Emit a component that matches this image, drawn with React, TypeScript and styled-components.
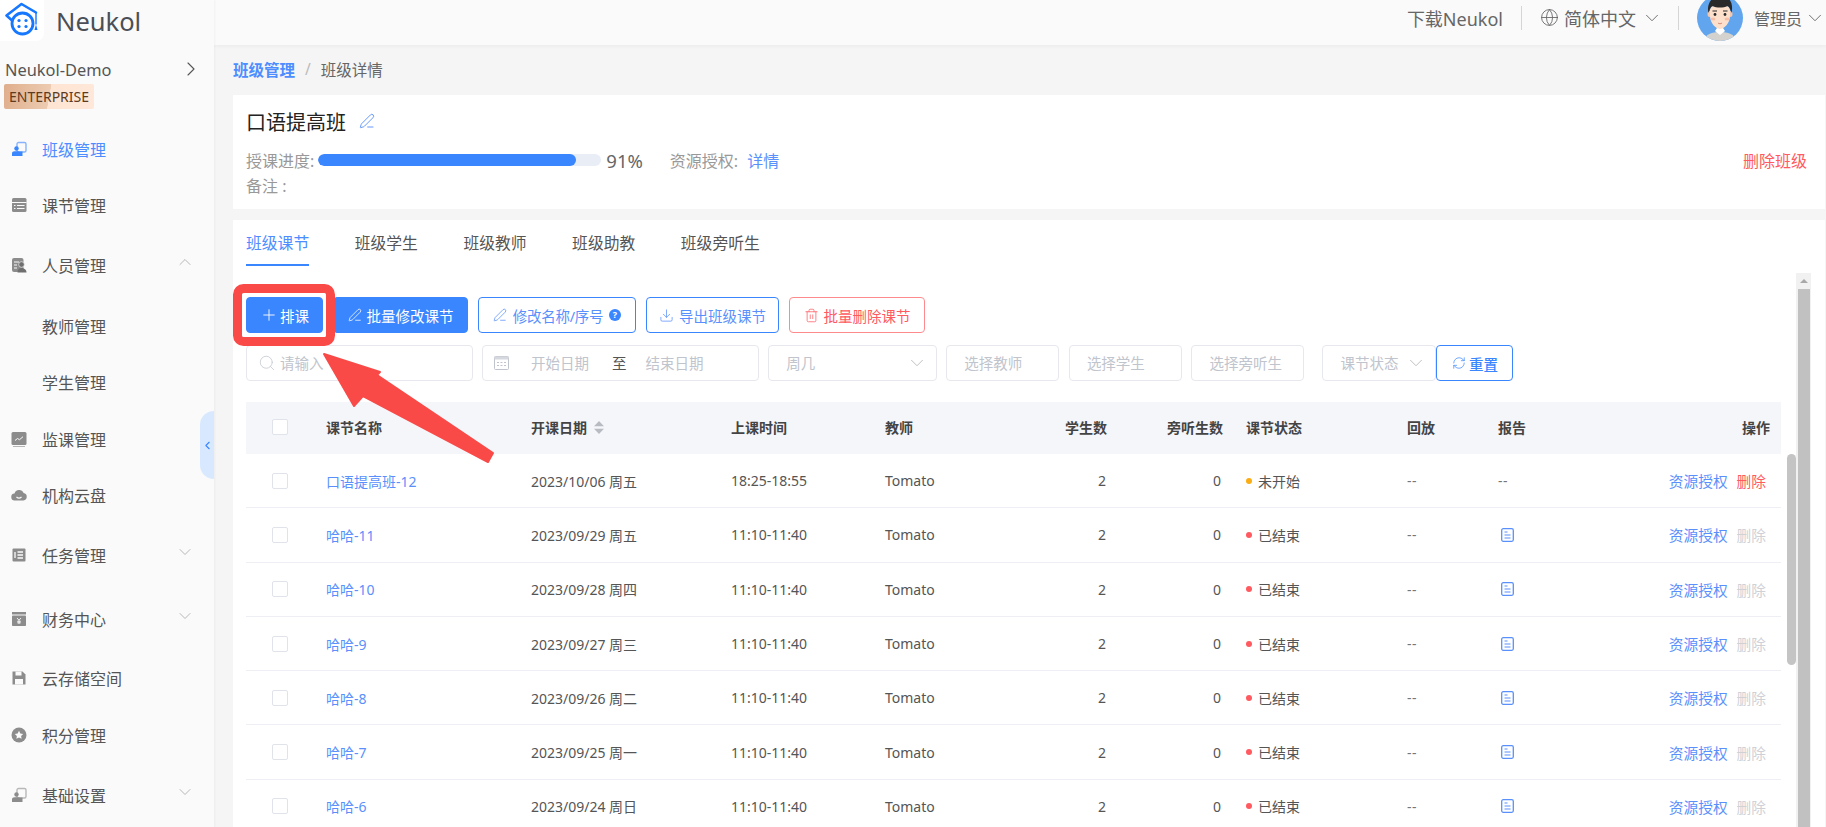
import React from "react"
import styled, { createGlobalStyle } from "styled-components"
import {
  ChevronDown,
  ChevronLeft,
  ChevronRight,
  ChevronUp,
  Download,
  Globe,
  PenLine,
  Plus,
  RefreshCw,
  Search,
  Trash2,
} from "lucide-react"

const blue = "#3a86ff"
const link = "#5a90fb"
const red = "#ff5a5f"

const GlobalStyle = createGlobalStyle`
  html, body {
    margin: 0;
    height: 100%;
    overflow: hidden;
  }
  body {
    font-family: "Noto Sans", "Noto Sans CJK SC", sans-serif;
    color: #555;
  }
`

const Page = styled.div`
  position: relative;
  display: flex;
  width: 1826px;
  height: 827px;
  overflow: hidden;
  background: #f5f5f5;
`

const Sidebar = styled.aside`
  position: relative;
  flex: 0 0 214px;
  background: #fafafa;
  box-shadow: 1px 0 2px rgba(0, 0, 0, 0.04);
`

const Brand = styled.div`
  display: flex;
  align-items: center;
  gap: 12px;
  height: 41px;
  font-size: 25.5px;
  color: #4a4f57;
`

const LogoTile = styled.div`
  width: 44px;
  height: 41px;
  background: #fff;
  border-radius: 0 0 8px 0;
`

const Org = styled.div`
  display: flex;
  align-items: center;
  justify-content: space-between;
  height: 24px;
  margin-top: 16px;
  padding: 0 11px 0 5px;
  font-size: 16.4px;
`

const EnterpriseBadge = styled.div`
  width: 90px;
  height: 25px;
  margin: 3px 0 0 4px;
  border-radius: 2px;
  background: linear-gradient(100deg, #dfae8c 0, #edcbb1 50%, #fee4d2 50.5%, #ffe8d9 100%);
  color: #5e3a20;
  font-size: 14px;
  line-height: 25px;
  text-align: center;
`

const Menu = styled.nav`
  margin-top: 20px;
`

const MenuItem = styled.div<{ $gap?: number; $active?: boolean }>`
  display: flex;
  align-items: center;
  height: 40px;
  margin-top: ${(p) => p.$gap ?? 0}px;
  padding: 0 19px 0 11px;
  font-size: 16px;
  color: ${(p) => (p.$active ? "#4d8dff" : "#555")};
`

const MenuIcon = styled.svg`
  flex: 0 0 16px;
  width: 16px;
  height: 16px;
  margin-right: 15px;
`

const MenuSpacer = styled.span`
  flex: 0 0 31px;
`

const MenuCaret = styled.span`
  display: flex;
  margin-left: auto;
  margin-top: -6px;
  color: #aaa;
`

const CollapseHandle = styled.div`
  position: absolute;
  top: 411px;
  right: 0;
  display: flex;
  align-items: center;
  justify-content: center;
  width: 14px;
  height: 68px;
  border-radius: 14px 0 0 14px;
  background: #d8e9ff;
  color: ${blue};
`

const Main = styled.main`
  flex: 1;
  min-width: 0;
  display: flex;
  flex-direction: column;
`

const TopBar = styled.header`
  display: flex;
  align-items: center;
  justify-content: flex-end;
  flex: 0 0 45px;
  height: 45px;
  min-height: 0;
  box-sizing: border-box;
  padding: 0 3px 10px 0;
  background: #fafafa;
  box-shadow: 0 1px 4px rgba(0, 0, 0, 0.05);
  font-size: 18px;
  color: #666;
`

const BarDivider = styled.span`
  width: 1px;
  height: 24px;
  margin: 0 18px;
  background: #d5d5d5;
`

const BarItem = styled.span<{ $small?: boolean }>`
  display: flex;
  align-items: center;
  gap: ${(p) => (p.$small ? 2 : 5)}px;
  font-size: ${(p) => (p.$small ? 16 : 18)}px;
`

const BarCaret = styled(ChevronDown)`
  margin-right: -3px;
`

const Avatar = styled.svg`
  width: 46px;
  height: 46px;
  margin: 0 11px 0 0;
  flex: none;
`

const Content = styled.div`
  flex: 1;
  min-height: 0;
  padding: 0 1px 0 19px;
`

const Crumbs = styled.div`
  display: flex;
  align-items: center;
  height: 50px;
  box-sizing: border-box;
  padding-bottom: 2px;
  font-size: 15.5px;
  color: #666;
`

const CrumbLink = styled.span`
  color: #4d8dff;
  font-weight: 700;
`

const CrumbSlash = styled.span`
  margin: 0 10px;
  color: #bbb;
`

const SummaryCard = styled.section`
  height: 114px;
  box-sizing: border-box;
  padding: 12px 18px 0 13px;
  background: #fff;
`

const TitleRow = styled.div`
  display: flex;
  align-items: center;
  gap: 13px;
  height: 28px;
  font-size: 20px;
  color: #222;
`

const InfoRow = styled.div<{ $first?: boolean }>`
  display: flex;
  align-items: center;
  height: ${(p) => (p.$first ? 26 : 24)}px;
  margin-top: ${(p) => (p.$first ? 12 : 0)}px;
  font-size: 16px;
  color: #999;
`

const ProgressTrack = styled.div`
  width: 283px;
  height: 12px;
  margin-left: 4px;
  border-radius: 6px;
  background: #e9edf5;
  overflow: hidden;
`

const ProgressFill = styled.div`
  height: 100%;
  border-radius: 6px;
  background: ${blue};
`

const Percent = styled.span`
  margin: 0 27px 0 5px;
  font-size: 18.5px;
  color: #666;
`

const LinkText = styled.span`
  margin-left: 9px;
  color: ${link};
`

const DangerText = styled.span`
  margin-left: auto;
  color: ${red};
`

const ClassCard = styled.section`
  position: relative;
  height: 607px;
  box-sizing: border-box;
  margin-top: 11px;
  padding: 11px 0 0 13px;
  background: #fff;
  overflow: hidden;
`

const Tabs = styled.div`
  display: flex;
  gap: 45.5px;
`

const Tab = styled.div<{ $active?: boolean }>`
  padding-bottom: 9px;
  border-bottom: 2px solid ${(p) => (p.$active ? blue : "transparent")};
  font-size: 15.8px;
  line-height: 24px;
  color: ${(p) => (p.$active ? "#4d8dff" : "#555")};
`

const Toolbar = styled.div`
  display: flex;
  gap: 10px;
  margin-top: 31px;
`

const Button = styled.button<{ $w: number; $tone: "solid" | "outline" | "danger"; $gap?: number }>`
  display: flex;
  align-items: center;
  justify-content: center;
  gap: ${(p) => p.$gap ?? 5}px;
  width: ${(p) => p.$w}px;
  height: 36px;
  padding: 0;
  border-radius: 4px;
  border: 1px solid ${(p) => (p.$tone === "danger" ? "#ff8a8e" : blue)};
  background: ${(p) => (p.$tone === "solid" ? blue : "#fff")};
  color: ${(p) => (p.$tone === "solid" ? "#fff" : p.$tone === "danger" ? red : link)};
  font: inherit;
  font-size: 14.5px;
`

const NameLabel = styled.span`
  letter-spacing: -0.3px;
`

const Filters = styled.div`
  display: flex;
  gap: 9.6px;
  margin-top: 12px;
`

const Field = styled.div<{ $w: number; $pad?: number; $after?: number }>`
  display: flex;
  align-items: center;
  width: ${(p) => p.$w}px;
  height: 36px;
  box-sizing: border-box;
  margin-left: ${(p) => p.$after ?? 0}px;
  padding: 0 8px 1px ${(p) => p.$pad ?? 11}px;
  border: 1px solid #e6e8ee;
  border-radius: 4px;
  font-size: 14.5px;
  color: #c0c4cc;
`

const FieldCaret = styled.span`
  display: flex;
  margin-left: auto;
  color: #bbb;
`

const FieldText = styled.span<{ $lead: number }>`
  margin-left: ${(p) => p.$lead}px;
`

const RangeTo = styled.span`
  margin: 0 19px 0 23px;
  color: #555;
`

const ResetButton = styled.button`
  display: flex;
  align-items: center;
  justify-content: center;
  gap: 3px;
  width: 77px;
  height: 36px;
  margin-left: -9.6px;
  padding: 0;
  border: 1px solid ${blue};
  border-radius: 4px;
  background: #fff;
  color: ${blue};
  font: inherit;
  font-size: 14.5px;
  font-weight: 500;
`

const Table = styled.div`
  width: 1535px;
  margin-top: 21px;
  font-size: 14px;
`

const columns = "80px 205px 200px 154px 115px 107px 116px 184px 91px 102px 181px"

const HeadRow = styled.div`
  display: grid;
  grid-template-columns: ${columns};
  align-items: center;
  height: 52px;
  box-sizing: border-box;
  padding-bottom: 2px;
  background: #f5f6fa;
  color: #444;
  font-weight: 700;
`

const BodyRow = styled.div`
  display: grid;
  grid-template-columns: ${columns};
  align-items: center;
  height: 54.3px;
  box-sizing: border-box;
  border-bottom: 1px solid #edeff5;
  color: #555;
`

const CheckCell = styled.div`
  padding-left: 26px;
`

const CheckBox = styled.span`
  display: block;
  width: 16px;
  height: 16px;
  box-sizing: border-box;
  border: 1px solid #e0e3ea;
  border-radius: 2px;
  background: #fff;
`

const SortCell = styled.div`
  display: flex;
  align-items: center;
  gap: 7px;
`

const NumCell = styled.div<{ $inset?: number }>`
  padding-right: ${(p) => p.$inset ?? 0}px;
  text-align: right;
`

const StatusCell = styled.div`
  display: flex;
  align-items: center;
  gap: 6px;
  padding-left: 23px;
`

const Dot = styled.span<{ $color: string }>`
  width: 6px;
  height: 6px;
  border-radius: 50%;
  background: ${(p) => p.$color};
`

const StatusLabel = styled.span``

const NameLink = styled.span`
  color: ${link};
`

const MutedCell = styled.div<{ $inset?: number }>`
  display: flex;
  align-items: center;
  padding-left: ${(p) => p.$inset ?? 0}px;
  color: #777;
  letter-spacing: 0.5px;
`

const OpsCell = styled.div<{ $head?: boolean }>`
  display: flex;
  justify-content: flex-end;
  gap: 9px;
  padding-right: ${(p) => (p.$head ? 11 : 15)}px;
  font-size: ${(p) => (p.$head ? 14 : 14.7)}px;
`

const OpLink = styled.span<{ $tone: "link" | "danger" | "off" }>`
  color: ${(p) => (p.$tone === "link" ? link : p.$tone === "danger" ? red : "#cfd1d6")};
`

const TableThumb = styled.div`
  position: absolute;
  top: 234px;
  right: 29px;
  width: 9px;
  height: 211px;
  border-radius: 5px;
  background: #c4c4c4;
`

const PageTrack = styled.div`
  position: absolute;
  top: 53px;
  right: 14px;
  bottom: 0;
  display: flex;
  flex-direction: column;
  width: 15px;
  background: #f1f1f1;
`

const TrackArrow = styled.div`
  flex: 0 0 16px;
  display: flex;
  align-items: center;
  justify-content: center;
  &::before {
    content: "";
    border: 4px solid transparent;
    border-top: 0;
    border-bottom: 4px solid #a8a8a8;
  }
`

const PageThumb = styled.div`
  flex: 1;
  margin: 0 1.5px;
  background: #c1c1c1;
`

const Callout = styled.svg`
  position: absolute;
  top: 280px;
  left: 225px;
  width: 280px;
  height: 190px;
  pointer-events: none;
`

const iconGrey = "#8c8c8c"

const ClassIcon = ({ color }: { color: string }) => (
  <MenuIcon viewBox="0 0 16 16">
    <rect x="6" y="1.500" width="9" height="9.500" rx="1.500" fill="none" stroke={color} strokeOpacity="0.6" strokeWidth="1.400" />
    <circle cx="5.500" cy="7.500" r="2.200" fill={color} />
    <path d="M1 15v-2.500C1 11 2 10.200 3.500 10.200h4c1 0 2.500 .5 4 .3v4.500z" fill={color} />
  </MenuIcon>
)

const TableIcon = () => (
  <MenuIcon viewBox="0 0 16 16">
    <rect x="1" y="1" width="14.500" height="14" rx="1.500" fill={iconGrey} />
    <path d="M1 5.500h14.500M3 8.500h1.500M6 8.500h7.500M3 11.500h1.500M6 11.500h7.500" stroke="#fafafa" strokeWidth="1.200" />
  </MenuIcon>
)

const StaffIcon = () => (
  <MenuIcon viewBox="0 0 16 16">
    <rect x="1" y="1" width="11.500" height="14" rx="2" fill={iconGrey} />
    <path d="M3 5h5M3 8h3M3 11h3" stroke="#fafafa" strokeWidth="1.200" />
    <circle cx="10.500" cy="7.500" r="2.800" fill="#6f6f6f" stroke="#fafafa" strokeWidth=".6" />
    <path d="M6.500 15.500c0-3 1.500-4.500 4-4.500s5 1.500 5 4.500z" fill="#6f6f6f" />
  </MenuIcon>
)

const MonitorIcon = () => (
  <MenuIcon viewBox="0 0 16 16">
    <rect x=".5" y="1" width="15" height="13" rx="1.500" fill={iconGrey} />
    <path d="M4 9.500l2.500-2 2 1.200 3.500-3" fill="none" stroke="#fafafa" strokeWidth="1" />
    <path d="M2 15.500h12" stroke="#b5b5b5" strokeWidth="1" />
  </MenuIcon>
)

const CloudIcon = () => (
  <MenuIcon viewBox="0 0 16 16">
    <path d="M4 13.500a3.500 3.500 0 0 1-.5-7A4.800 4.800 0 0 1 12.600 6a3.800 3.800 0 0 1-.1 7.500z" fill={iconGrey} />
    <path d="M5.500 10c1.500 1.300 3.500 1.300 5 0" fill="none" stroke="#fafafa" strokeWidth="1.200" />
  </MenuIcon>
)

const TaskIcon = () => (
  <MenuIcon viewBox="0 0 16 16">
    <rect x="1.500" y="1.500" width="13" height="13" rx="1" fill={iconGrey} />
    <path d="M4 5v6M6.500 5h5.500M6.500 8h5.500M6.500 11h5.500" stroke="#fafafa" strokeWidth="1.300" />
  </MenuIcon>
)

const FinanceIcon = () => (
  <MenuIcon viewBox="0 0 16 16">
    <rect x="1" y="1" width="14" height="2.500" fill={iconGrey} />
    <rect x="1" y="4.500" width="14" height="10.500" rx=".8" fill={iconGrey} />
    <path d="M6 7l2 2.200L10 7M8 9.200V13M6.200 10.300h3.600M6.200 11.800h3.600" fill="none" stroke="#fafafa" strokeWidth=".9" />
  </MenuIcon>
)

const StorageIcon = () => (
  <MenuIcon viewBox="0 0 16 16">
    <path d="M1.500 1.500h10l3 3v10h-13z" fill={iconGrey} />
    <rect x="4.500" y="1.500" width="6" height="4" fill="#fafafa" />
    <rect x="4" y="9" width="8" height="5.500" fill="#fafafa" />
  </MenuIcon>
)

const PointsIcon = () => (
  <MenuIcon viewBox="0 0 16 16">
    <circle cx="8" cy="8" r="7.500" fill={iconGrey} />
    <path d="M8 3.800l1.300 2.700 2.900.4-2.100 2 .5 2.900L8 10.400l-2.600 1.400.5-2.900-2.100-2 2.900-.4z" fill="#fafafa" />
  </MenuIcon>
)

const Logo = () => (
  <svg width="44" height="41" viewBox="0 0 44 41">
    <path
      d="M6.500 15.500 L21.500 4 L36 12.500 M6.500 15.500 L11.500 20"
      fill="none"
      stroke="#1677ff"
      strokeWidth="2.600"
      strokeLinecap="round"
      strokeLinejoin="round"
    />
    <circle cx="22.500" cy="23.500" r="10.500" fill="none" stroke="#1677ff" strokeWidth="2.800" />
    <circle cx="19" cy="20.500" r="1.600" fill="#1677ff" />
    <circle cx="26" cy="20.500" r="1.600" fill="#1677ff" />
    <circle cx="19" cy="26.500" r="1.600" fill="#1677ff" />
    <circle cx="26" cy="26.500" r="1.600" fill="#1677ff" />
    <path d="M36 12.500v12" stroke="#1677ff" strokeWidth="1.400" />
    <path d="M34.500 30l1.500-5.500 1.500 5.500z" fill="#1677ff" />
  </svg>
)

const AvatarArt = () => (
  <Avatar viewBox="0 0 46 46">
    <defs>
      <clipPath id="avatar-clip">
        <circle cx="23" cy="23" r="23" />
      </clipPath>
    </defs>
    <g clipPath="url(#avatar-clip)">
      <rect width="46" height="46" fill="#60a5ee" />
      <path d="M7 46c1-7 8-9 16-9s15 2 16 9z" fill="#d4d2cf" />
      <path d="M18 36l5 4 5-4-2-3h-6z" fill="#fff" />
      <ellipse cx="12.500" cy="19" rx="2" ry="3" fill="#f6c8ad" />
      <ellipse cx="33.500" cy="19" rx="2" ry="3" fill="#f6c8ad" />
      <path d="M13 15c0-7 20-7 20 0v6c0 7-6 13-10 13s-10-6-10-13z" fill="#fde0cb" />
      <path d="M11.500 18c-2-8 2-17 12-17s13 8 11 17c-1-3-2-6-4-7-4 2-11 2-15 0-2 1-3 4-4 7z" fill="#2a2a2a" />
      <circle cx="18" cy="19.500" r="1.400" fill="#2a2a2a" />
      <circle cx="28" cy="19.500" r="1.400" fill="#2a2a2a" />
      <path d="M15.500 16h4.500M26 16h4.500" stroke="#2a2a2a" strokeWidth="1" />
      <ellipse cx="16" cy="24" rx="2.400" ry="1.500" fill="#f8bfa8" />
      <ellipse cx="30" cy="24" rx="2.400" ry="1.500" fill="#f8bfa8" />
      <path d="M21 28c1.300 1 2.700 1 4 0" fill="none" stroke="#d98a78" strokeWidth="1" />
    </g>
  </Avatar>
)

const HelpBadge = () => (
  <svg width="12" height="12" viewBox="0 0 12 12">
    <circle cx="6" cy="6" r="6" fill={blue} />
    <text x="6" y="9.200" textAnchor="middle" fontSize="9" fontWeight="700" fill="#fff">
      ?
    </text>
  </svg>
)

const CalendarGlyph = () => (
  <svg width="15" height="15" viewBox="0 0 15 15">
    <rect x=".5" y="1.500" width="14" height="13" rx="1" fill="none" stroke="#c0c4cc" />
    <rect x=".5" y="1.500" width="14" height="3" fill="#d5d8de" />
    <path d="M3 7.500h2M6.500 7.500h2M10 7.500h2M3 10.500h2M6.500 10.500h2M10 10.500h2" stroke="#c0c4cc" />
  </svg>
)

const SortGlyph = () => (
  <svg width="10" height="13" viewBox="0 0 10 13">
    <path d="M5 0l5 5.200H0zM5 13l5-5.200H0z" fill="#b8bbc2" />
  </svg>
)

const ReportGlyph = () => (
  <svg width="13" height="14" viewBox="0 0 13 14">
    <rect x=".7" y=".7" width="11.600" height="12.600" rx="1.500" fill="none" stroke="#5a90fb" strokeWidth="1.300" />
    <path d="M3.500 4h3M3.500 7h6M3.500 10h6" stroke="#5a90fb" strokeWidth="1.200" />
  </svg>
)

const AnnotationArrow = () => (
  <Callout viewBox="0 0 280 190">
    <rect x="12.500" y="8.500" width="93" height="53" rx="6" fill="none" stroke="#f94a48" strokeWidth="9" />
    <path
      d="M99 74 L155 92 L152 95 L268 173 L263 182 L138 116 L129 126 Z"
      fill="#f94a48"
      stroke="#f94a48"
      strokeWidth="2"
      strokeLinejoin="round"
    />
  </Callout>
)

const lessons = [
  { name: "口语提高班-12", date: "2023/10/06 周五", time: "18:25-18:55", upcoming: true },
  { name: "哈哈-11", date: "2023/09/29 周五", time: "11:10-11:40" },
  { name: "哈哈-10", date: "2023/09/28 周四", time: "11:10-11:40" },
  { name: "哈哈-9", date: "2023/09/27 周三", time: "11:10-11:40" },
  { name: "哈哈-8", date: "2023/09/26 周二", time: "11:10-11:40" },
  { name: "哈哈-7", date: "2023/09/25 周一", time: "11:10-11:40" },
  { name: "哈哈-6", date: "2023/09/24 周日", time: "11:10-11:40" },
]

export default function App() {
  return (
    <Page>
      <GlobalStyle />
      <Sidebar>
        <Brand>
          <LogoTile>
            <Logo />
          </LogoTile>
          Neukol
        </Brand>
        <Org>
          Neukol-Demo
          <ChevronRight size={24} strokeWidth={1.1} />
        </Org>
        <EnterpriseBadge>ENTERPRISE</EnterpriseBadge>
        <Menu>
          <MenuItem $active>
            <ClassIcon color="#3a86ff" />
            班级管理
          </MenuItem>
          <MenuItem $gap={16}>
            <TableIcon />
            课节管理
          </MenuItem>
          <MenuItem $gap={20}>
            <StaffIcon />
            人员管理
            <MenuCaret>
              <ChevronUp size={20} strokeWidth={1} />
            </MenuCaret>
          </MenuItem>
          <MenuItem $gap={21}>
            <MenuSpacer />
            教师管理
          </MenuItem>
          <MenuItem $gap={16}>
            <MenuSpacer />
            学生管理
          </MenuItem>
          <MenuItem $gap={17}>
            <MonitorIcon />
            监课管理
          </MenuItem>
          <MenuItem $gap={16}>
            <CloudIcon />
            机构云盘
          </MenuItem>
          <MenuItem $gap={20}>
            <TaskIcon />
            任务管理
            <MenuCaret>
              <ChevronDown size={20} strokeWidth={1} />
            </MenuCaret>
          </MenuItem>
          <MenuItem $gap={24}>
            <FinanceIcon />
            财务中心
            <MenuCaret>
              <ChevronDown size={20} strokeWidth={1} />
            </MenuCaret>
          </MenuItem>
          <MenuItem $gap={19}>
            <StorageIcon />
            云存储空间
          </MenuItem>
          <MenuItem $gap={17}>
            <PointsIcon />
            积分管理
          </MenuItem>
          <MenuItem $gap={20}>
            <ClassIcon color={iconGrey} />
            基础设置
            <MenuCaret>
              <ChevronDown size={20} strokeWidth={1} />
            </MenuCaret>
          </MenuItem>
        </Menu>
        <CollapseHandle>
          <ChevronLeft size={13} strokeWidth={2} />
        </CollapseHandle>
      </Sidebar>

      <Main>
        <TopBar>
          <BarItem>下载Neukol</BarItem>
          <BarDivider />
          <BarItem>
            <Globe size={19} strokeWidth={1.1} />
            简体中文
            <BarCaret size={22} strokeWidth={1} />
          </BarItem>
          <BarDivider />
          <AvatarArt />
          <BarItem $small>
            管理员
            <BarCaret size={22} strokeWidth={1} />
          </BarItem>
        </TopBar>

        <Content>
          <Crumbs>
            <CrumbLink>班级管理</CrumbLink>
            <CrumbSlash>/</CrumbSlash>
            班级详情
          </Crumbs>

          <SummaryCard>
            <TitleRow>
              口语提高班
              <PenLine size={16} strokeWidth={1.4} color={link} />
            </TitleRow>
            <InfoRow $first>
              授课进度:
              <ProgressTrack>
                <ProgressFill style={{ width: "91%" }} />
              </ProgressTrack>
              <Percent>91%</Percent>
              资源授权:
              <LinkText>详情</LinkText>
              <DangerText>删除班级</DangerText>
            </InfoRow>
            <InfoRow>备注 :</InfoRow>
          </SummaryCard>

          <ClassCard>
            <Tabs>
              <Tab $active>班级课节</Tab>
              <Tab>班级学生</Tab>
              <Tab>班级教师</Tab>
              <Tab>班级助教</Tab>
              <Tab>班级旁听生</Tab>
            </Tabs>

            <Toolbar>
              <Button $w={77} $tone="solid" $gap={2}>
                <Plus size={18} strokeWidth={1.2} />
                排课
              </Button>
              <Button $w={135} $tone="solid">
                <PenLine size={14} strokeWidth={1.3} />
                批量修改课节
              </Button>
              <Button $w={158} $tone="outline" $gap={6}>
                <PenLine size={14} strokeWidth={1.3} />
                <NameLabel>修改名称/序号</NameLabel>
                <HelpBadge />
              </Button>
              <Button $w={133} $tone="outline">
                <Download size={15} strokeWidth={1.2} />
                导出班级课节
              </Button>
              <Button $w={136} $tone="danger">
                <Trash2 size={15} strokeWidth={1.2} />
                批量删除课节
              </Button>
            </Toolbar>

            <Filters>
              <Field $w={226.5}>
                <Search size={18} strokeWidth={1} />
                <FieldText $lead={4}>请输入</FieldText>
              </Field>
              <Field $w={276.5}>
                <CalendarGlyph />
                <FieldText $lead={22}>开始日期</FieldText>
                <RangeTo>至</RangeTo>
                结束日期
              </Field>
              <Field $w={168.5} $pad={17}>
                周几
                <FieldCaret>
                  <ChevronDown size={22} strokeWidth={1} />
                </FieldCaret>
              </Field>
              <Field $w={113} $pad={17}>
                选择教师
              </Field>
              <Field $w={113} $pad={17}>
                选择学生
              </Field>
              <Field $w={113} $pad={17}>
                选择旁听生
              </Field>
              <Field $w={114} $pad={17} $after={8.4}>
                课节状态
                <FieldCaret>
                  <ChevronDown size={22} strokeWidth={1} />
                </FieldCaret>
              </Field>
              <ResetButton>
                <RefreshCw size={14} strokeWidth={1.2} />
                重置
              </ResetButton>
            </Filters>

            <Table>
              <HeadRow>
                <CheckCell>
                  <CheckBox />
                </CheckCell>
                <div>课节名称</div>
                <SortCell>
                  开课日期
                  <SortGlyph />
                </SortCell>
                <div>上课时间</div>
                <div>教师</div>
                <NumCell>学生数</NumCell>
                <NumCell>旁听生数</NumCell>
                <StatusCell>课节状态</StatusCell>
                <div>回放</div>
                <div>报告</div>
                <OpsCell $head>操作</OpsCell>
              </HeadRow>
              {lessons.map((lesson) => (
                <BodyRow key={lesson.name}>
                  <CheckCell>
                    <CheckBox />
                  </CheckCell>
                  <NameLink>{lesson.name}</NameLink>
                  <div>{lesson.date}</div>
                  <div>{lesson.time}</div>
                  <div>Tomato</div>
                  <NumCell $inset={1}>2</NumCell>
                  <NumCell $inset={2}>0</NumCell>
                  <StatusCell>
                    <Dot $color={lesson.upcoming ? "#faad14" : "#ff5a5f"} />
                    <StatusLabel>{lesson.upcoming ? "未开始" : "已结束"}</StatusLabel>
                  </StatusCell>
                  <MutedCell>--</MutedCell>
                  <MutedCell $inset={lesson.upcoming ? 0 : 3}>{lesson.upcoming ? "--" : <ReportGlyph />}</MutedCell>
                  <OpsCell>
                    <OpLink $tone="link">资源授权</OpLink>
                    <OpLink $tone={lesson.upcoming ? "danger" : "off"}>删除</OpLink>
                  </OpsCell>
                </BodyRow>
              ))}
            </Table>

            <TableThumb />
            <PageTrack>
              <TrackArrow />
              <PageThumb />
            </PageTrack>
          </ClassCard>
        </Content>
      </Main>

      <AnnotationArrow />
    </Page>
  )
}
